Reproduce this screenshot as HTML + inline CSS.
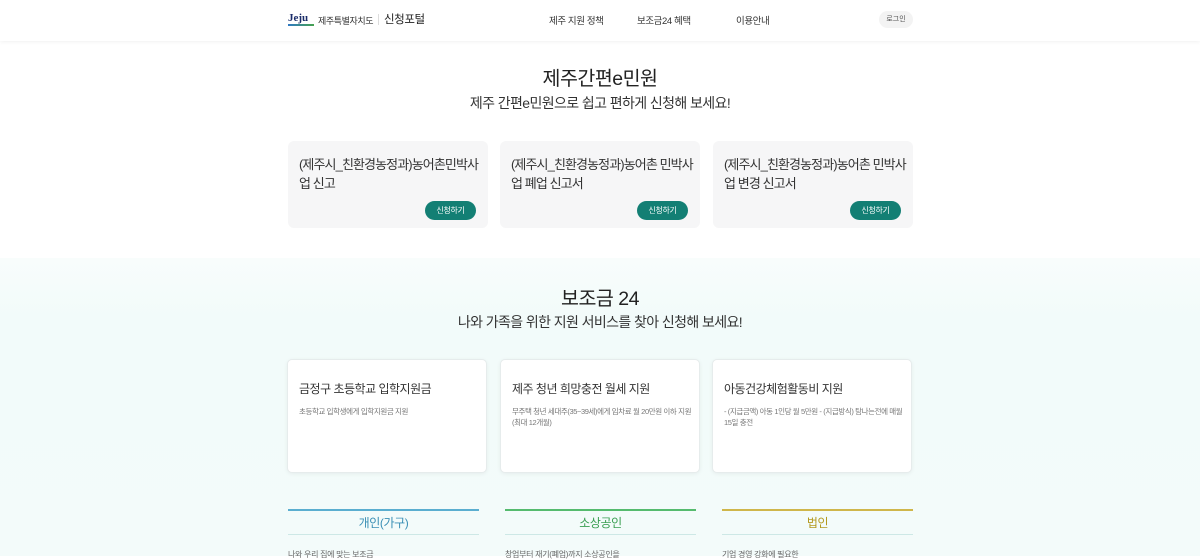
<!DOCTYPE html>
<html><head><meta charset="utf-8"><style>
*{margin:0;padding:0;box-sizing:border-box}
body{width:1200px;height:556px;overflow:hidden;font-family:"Liberation Sans","Noto Sans CJK KR",sans-serif;color:#222;background:#fff;position:relative}
.hdr{position:absolute;top:0;left:0;width:1200px;height:41px;background:#fff;box-shadow:0 1px 4px rgba(0,0,0,.06);z-index:2}
.a{position:absolute;white-space:nowrap}
.low{position:absolute;top:258px;left:0;width:1200px;height:298px;background:linear-gradient(#f8fdfc,#f2fbfa 60px,#f3fbfa)}
.c1{position:absolute;top:141px;width:200px;height:87px;background:#f6f6f7;border-radius:6px}
.c1 p{position:absolute;left:11px;top:14px;font-size:13px;letter-spacing:-0.9px;line-height:19px;color:#333;width:182px;word-break:break-all}
.btn{position:absolute;right:12px;top:60px;width:51px;height:19px;border-radius:10px;background:#137f74;color:#fff;font-size:8px;letter-spacing:-0.3px;text-align:center;line-height:19px}
.c2{position:absolute;top:359px;width:200px;height:114px;background:#fff;border:1px solid #e6ecec;border-radius:5px;box-shadow:0 1px 4px rgba(0,0,0,.06)}
.c2 h3{position:absolute;left:11px;top:20px;font-size:12px;letter-spacing:-0.5px;font-weight:normal;color:#333}
.c2 p{position:absolute;left:11px;top:46px;font-size:7.5px;letter-spacing:-0.4px;line-height:11px;color:#777;width:180px}
.tab{position:absolute;top:509px;width:191px;height:26px;border-top:2px solid;border-bottom:1px solid #cde8e6;text-align:center;font-size:12px;letter-spacing:-0.4px;line-height:24px}
</style></head><body>
<div class="hdr">
<div class="a" style="left:288px;top:12px;font-family:'Liberation Serif',serif;font-weight:bold;font-size:11px;color:#1b2d6a">Jeju</div>
<div class="a" style="left:288px;top:24px;width:26px;height:2px;background:linear-gradient(90deg,#2f78c4,#46a24f)"></div>
<div class="a" style="left:318px;top:14px;font-size:9px;letter-spacing:-0.4px;color:#333">제주특별자치도</div>
<div class="a" style="left:378px;top:14px;width:1px;height:11px;background:#ddd"></div>
<div class="a" style="left:384px;top:11px;font-size:11.5px;letter-spacing:-0.4px;color:#222">신청포털</div>
<div class="a" style="left:549px;top:13px;font-size:9.5px;letter-spacing:-0.4px;color:#333">제주 지원 정책</div>
<div class="a" style="left:637px;top:13px;font-size:9.5px;letter-spacing:-0.4px;color:#333">보조금24 혜택</div>
<div class="a" style="left:736px;top:13px;font-size:9.5px;letter-spacing:-0.4px;color:#333">이용안내</div>
<div class="a" style="left:879px;top:11px;width:34px;height:17px;border-radius:9px;background:#f3f3f3;font-size:7px;color:#555;text-align:center;line-height:17px">로그인</div>
</div>
<div class="a" style="left:0;width:1200px;top:62px;text-align:center;font-size:19.5px;letter-spacing:-0.5px;color:#222">제주간편e민원</div>
<div class="a" style="left:0;width:1200px;top:93px;text-align:center;font-size:14px;letter-spacing:-0.6px;color:#333">제주 간편e민원으로 쉽고 편하게 신청해 보세요!</div>
<div class="c1" style="left:288px"><p>(제주시_친환경농정과)농어촌민박사업 신고</p><div class="btn">신청하기</div></div>
<div class="c1" style="left:500px"><p>(제주시_친환경농정과)농어촌 민박사업 폐업 신고서</p><div class="btn">신청하기</div></div>
<div class="c1" style="left:713px"><p>(제주시_친환경농정과)농어촌 민박사업 변경 신고서</p><div class="btn">신청하기</div></div>
<div class="low"></div>
<div class="a" style="left:0;width:1200px;top:282px;text-align:center;font-size:19.5px;letter-spacing:-0.5px;color:#222">보조금 24</div>
<div class="a" style="left:0;width:1200px;top:312px;text-align:center;font-size:14px;letter-spacing:-0.6px;color:#333">나와 가족을 위한 지원 서비스를 찾아 신청해 보세요!</div>
<div class="c2" style="left:287px"><h3>금정구 초등학교 입학지원금</h3><p>초등학교 입학생에게 입학지원금 지원</p></div>
<div class="c2" style="left:500px"><h3>제주 청년 희망충전 월세 지원</h3><p>무주택 청년 세대주(35~39세)에게 임차료 월 20만원 이하 지원(최대 12개월)</p></div>
<div class="c2" style="left:712px"><h3>아동건강체험활동비 지원</h3><p>- (지급금액) 아동 1인당 월 5만원 - (지급방식) 탐나는전에 매월 15일 충전</p></div>
<div class="tab" style="left:288px;border-top-color:#5aaed0;color:#3a8fb5">개인(가구)</div>
<div class="tab" style="left:505px;border-top-color:#55bb6e;color:#3a9f52">소상공인</div>
<div class="tab" style="left:722px;border-top-color:#cfb64a;color:#b49a20">법인</div>
<div class="a" style="left:288px;top:549px;font-size:8px;letter-spacing:-0.3px;color:#666">나와 우리 집에 맞는 보조금</div>
<div class="a" style="left:505px;top:549px;font-size:8px;letter-spacing:-0.3px;color:#666">창업부터 재기(폐업)까지 소상공인을</div>
<div class="a" style="left:722px;top:549px;font-size:8px;letter-spacing:-0.3px;color:#666">기업 경영 강화에 필요한</div>
</body></html>
